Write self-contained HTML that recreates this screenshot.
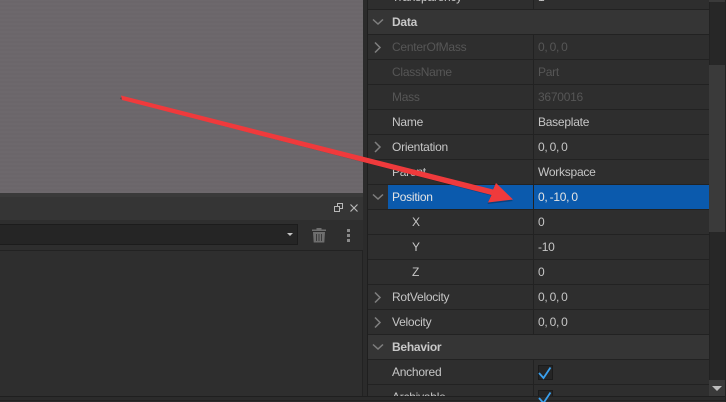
<!DOCTYPE html>
<html><head><meta charset="utf-8"><style>
html,body{margin:0;padding:0;background:#2b2b2b;width:726px;height:402px;overflow:hidden}
#app{position:absolute;left:0;top:0;width:726px;height:402px;overflow:hidden;font:12px "Liberation Sans",sans-serif;color:#c6c6c6}
div{position:absolute;box-sizing:border-box}
.vp{left:0;top:0;width:363px;height:193px;background-color:#6b666a;background-image:repeating-linear-gradient(0deg,rgba(255,255,255,.012) 0 2px,transparent 2px 4px)}
.row{left:368px;width:341px;height:25px;background:#2e2e2e;border-bottom:1px solid #222}
.row.h{background:#353535}
.n,.v{top:0;height:24px;line-height:24px;white-space:nowrap;letter-spacing:-.25px}
.n{left:24px}.v{left:170px;word-spacing:-1px}
.sub{left:44px}
.d{color:#565656}
.b{font-weight:bold;color:#c8c8c8}
.div{left:165px;top:0;width:1px;height:25px;background:#222}
svg{position:absolute;left:0;top:0}
</style></head><body><div id="app">
<div class="vp"></div>
<div style="left:0;top:193px;width:363px;height:4px;background:#3a3a3a"></div>
<div style="left:0;top:197px;width:363px;height:23px;background:#353535"></div>
<div style="left:0;top:220px;width:363px;height:30px;background:#2e2e2e"></div>
<div style="left:0;top:224px;width:298px;height:21px;background:#252525;border:1px solid #1c1c1c;border-left:0"></div>
<div style="left:0;top:250px;width:363px;height:147px;background:#2e2e2e;border-top:1px solid #222;border-right:1px solid #222"></div>
<div style="left:363px;top:0;width:5px;height:402px;background:#2b2b2b;border-right:1px solid #1f1f1f"></div>

<div class="row" style="top:-15px"><div class="n">Transparency</div><div class="v">1</div><div class="div"></div></div>
<div class="row h" style="top:10px"><div class="n b">Data</div></div>
<div class="row" style="top:35px"><div class="n d">CenterOfMass</div><div class="v d">0, 0, 0</div><div class="div"></div></div>
<div class="row" style="top:60px"><div class="n d">ClassName</div><div class="v d">Part</div><div class="div"></div></div>
<div class="row" style="top:85px"><div class="n d">Mass</div><div class="v d">3670016</div><div class="div"></div></div>
<div class="row" style="top:110px"><div class="n">Name</div><div class="v">Baseplate</div><div class="div"></div></div>
<div class="row" style="top:135px"><div class="n">Orientation</div><div class="v">0, 0, 0</div><div class="div"></div></div>
<div class="row" style="top:160px"><div class="n">Parent</div><div class="v">Workspace</div><div class="div"></div></div>
<div class="row" style="top:185px"><div style="left:20px;top:0;width:321px;height:24px;background:#0b5aad"></div><div class="n" style="color:#e4e4e4">Position</div><div class="v" style="color:#e4e4e4">0, -10, 0</div><div class="div"></div></div>
<div class="row" style="top:210px"><div class="n sub">X</div><div class="v">0</div><div class="div"></div></div>
<div class="row" style="top:235px"><div class="n sub">Y</div><div class="v">-10</div><div class="div"></div></div>
<div class="row" style="top:260px"><div class="n sub">Z</div><div class="v">0</div><div class="div"></div></div>
<div class="row" style="top:285px"><div class="n">RotVelocity</div><div class="v">0, 0, 0</div><div class="div"></div></div>
<div class="row" style="top:310px"><div class="n">Velocity</div><div class="v">0, 0, 0</div><div class="div"></div></div>
<div class="row h" style="top:335px"><div class="n b">Behavior</div></div>
<div class="row" style="top:360px"><div class="n">Anchored</div><div class="div"></div><div style="left:170px;top:5px;width:15px;height:15px;background:#252525;border:1px solid #1b1b1b"></div></div>
<div class="row" style="top:385px"><div class="n">Archivable</div><div class="div"></div><div style="left:170px;top:5px;width:15px;height:15px;background:#252525;border:1px solid #1b1b1b"></div></div>

<div style="left:709px;top:0;width:16px;height:396px;background:#272727;border-left:1px solid #222"></div>
<div style="left:709px;top:0;width:16px;height:2px;background:#3a3a3a"></div>
<div style="left:709px;top:65px;width:16px;height:167px;background:#3a3a3a"></div>
<div style="left:709px;top:380px;width:16px;height:16px;background:#3a3a3a"></div>
<div style="left:0;top:396px;width:726px;height:6px;background:#2b2b2b;border-top:1px solid #1f1f1f"></div>
<div style="left:0;top:400px;width:726px;height:1px;background:#222"></div>
<div style="left:725px;top:0;width:1px;height:402px;background:#222"></div>

<svg width="726" height="402" viewBox="0 0 726 402">
<g fill="none" stroke="#7f7f7f" stroke-width="1.5">
<path d="M373 19.500l5 4.500 5-4.500"/>
<path d="M375 42.500l5 5-5 5"/>
<path d="M375 142l5 5-5 5"/>
<path d="M373 194.500l5 4.500 5-4.500"/>
<path d="M375 292.500l5 5-5 5"/>
<path d="M375 317.500l5 5-5 5"/>
<path d="M373 344.500l5 4.500 5-4.500"/>
</g>
<path d="M539 373l4.500 5 7-10.500" fill="none" stroke="#3aa0ee" stroke-width="1.800"/>
<path d="M539 398l4.500 5 7-10.500" fill="none" stroke="#3aa0ee" stroke-width="1.800"/>
<path d="M712 386h10l-5 5z" fill="#bdbdbd"/>
<path d="M287 233h6l-3 3z" fill="#c4c4c4"/>
<g fill="none" stroke="#b8b8b8" stroke-width="1">
<rect x="337.500" y="203.500" width="5" height="5"/>
<rect x="334.500" y="206.500" width="5" height="5" fill="#353535"/>
<path d="M350.500 204.500l7 7m0-7l-7 7" stroke-width="1.200"/>
</g>
<g fill="#6e6e6e">
<rect x="312" y="229.500" width="14" height="1.500"/><rect x="316.500" y="228" width="5" height="2"/>
<path d="M313 232h12l-.7 10.500h-10.600z"/>
</g>
<path d="M316.500 234v7M319 234v7M321.500 234v7" stroke="#3a3a3a" stroke-width="1"/>
<g fill="#8a8a8a"><rect x="347" y="229" width="3" height="3"/><rect x="347" y="234" width="3" height="3"/><rect x="347" y="239" width="3" height="3"/></g>
<path d="M121 97L492 193.500 488.500 202 514 199 495 184 492.500 192 122 95z" fill="#000" opacity=".25" transform="translate(-1,2)"/>
<path d="M121 95.500L493 189.500 496 183 513 199.500 488 202.500 491.500 195 122 100z" fill="#ef3a3c"/>
</svg>
</div></body></html>
